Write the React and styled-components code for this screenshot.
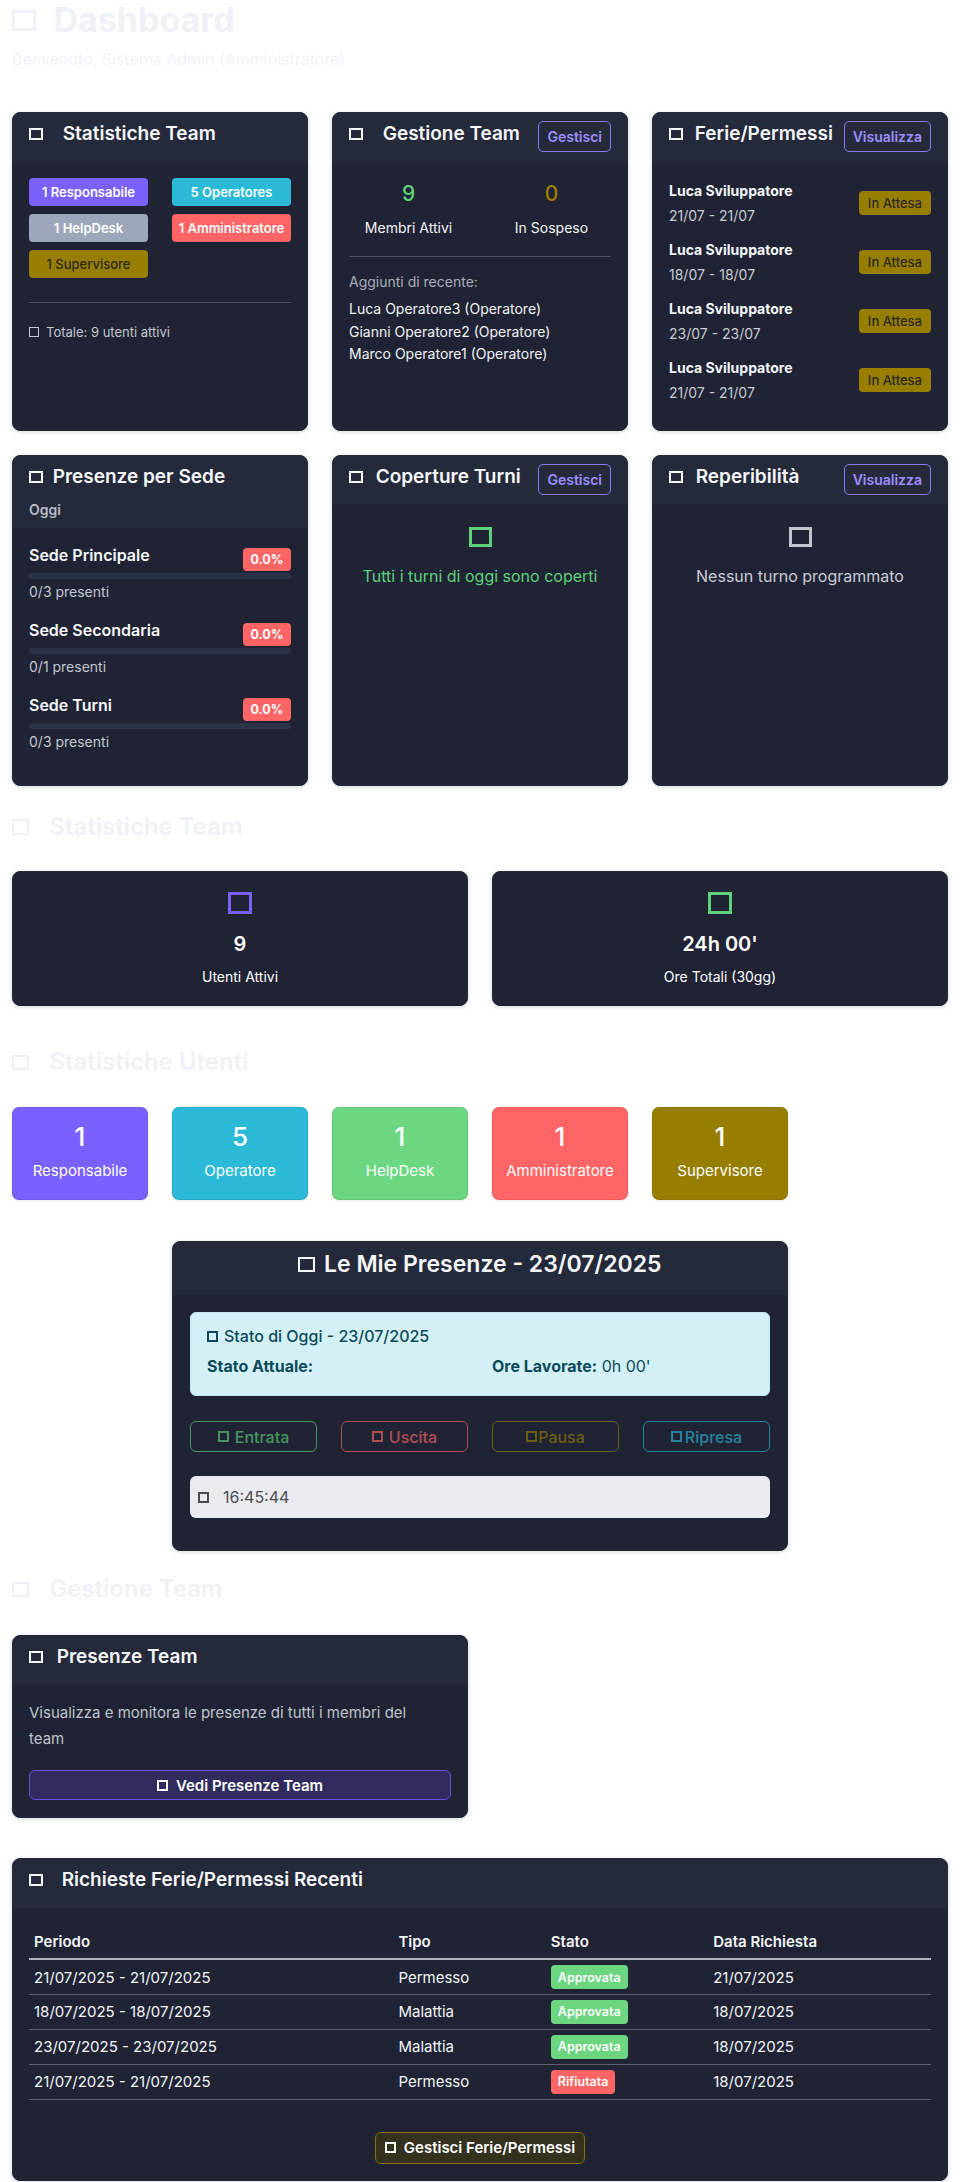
import React from "react";
import styled, { createGlobalStyle } from "styled-components";

const GlobalStyle = createGlobalStyle`
  * {
    box-sizing: border-box;
  }
  body {
    margin: 0;
    background: #ffffff;
    font-family: Inter, "Noto Sans", "Liberation Sans", sans-serif;
    color: #f3f5f8;
  }
`;

const Page = styled.div`
  width: 960px;
  padding: 0 12px 40px;
`;

// the icons never loaded in the original page, they show as empty boxes
const Tofu = styled.span`
  display: inline-block;
  width: ${(p) => p.$w || "0.72em"};
  height: ${(p) => p.$h || "0.63em"};
  border: ${(p) => p.$b || "0.1em"} solid ${(p) => p.$color || "currentColor"};
  margin-right: ${(p) => (p.$gap === undefined ? 8 : p.$gap)}px;
  vertical-align: 0.02em;
  flex-shrink: 0;
`;

const PageTitle = styled.h1`
  margin: 0;
  font-size: 34px;
  font-weight: 700;
  line-height: 40px;
  color: #eef2f7;
`;

const PageSubtitle = styled.p`
  margin: 7px 0 0;
  font-size: 16px;
  line-height: 24px;
  color: #f0f3f7;
`;

const SectionTitle = styled.h3`
  margin: ${(p) => p.$mt}px 0 ${(p) => p.$mb}px;
  font-size: 24px;
  font-weight: 600;
  line-height: 29px;
  color: #eef2f7;
`;

const Grid = styled.div`
  display: grid;
  grid-template-columns: repeat(${(p) => p.$cols}, 1fr);
  gap: 24px;
  margin-top: ${(p) => p.$mt || 0}px;
`;

const Card = styled.div`
  background: #1f2334;
  border: 1px solid #23283a;
  border-radius: 8px;
  overflow: hidden;
  box-shadow: 0 1px 4px rgba(15, 20, 35, 0.18);
  grid-column: ${(p) => p.$span || "auto"};
  margin-top: ${(p) => p.$mt || 0}px;
`;

const CardHeader = styled.div`
  display: flex;
  flex-direction: ${(p) => (p.$stack ? "column" : "row")};
  justify-content: ${(p) => (p.$center ? "center" : "space-between")};
  align-items: flex-start;
  min-height: 49px;
  padding: 8px 16px;
  background: #252a3b;
`;

const CardTitle = styled.h5`
  margin: 0;
  font-size: 19px;
  font-weight: 600;
  line-height: 25px;
  color: #f5f7fa;
  white-space: nowrap;
`;

const BigTitle = styled.h4`
  margin: 0 0 9px;
  width: 100%;
  text-align: center;
  font-size: 23px;
  font-weight: 600;
  line-height: 28px;
  color: #f5f7fa;
`;

const HeaderNote = styled.div`
  margin-top: 11px;
  font-size: 14px;
  font-weight: 600;
  line-height: 20px;
  color: #b5bac5;
`;

const SmallOutline = styled.button`
  height: 31px;
  padding: 0 8px;
  border: 1px solid #8b78f3;
  border-radius: 5px;
  background: transparent;
  color: #9e8dff;
  font-family: inherit;
  font-size: 14px;
  font-weight: 600;
`;

const CardBody = styled.div`
  padding: ${(p) => p.$pad || "16px"};
  text-align: ${(p) => (p.$center ? "center" : "left")};
`;

/* --- Statistiche Team card --- */

const BadgeGrid = styled.div`
  display: grid;
  grid-template-columns: 1fr 1fr;
  column-gap: 24px;
  row-gap: 8px;
`;

const RoleBadge = styled.div`
  height: 28px;
  border-radius: 4px;
  background: ${(p) => p.$bg};
  color: ${(p) => p.$fg || "#ffffff"};
  font-size: 13px;
  font-weight: ${(p) => p.$weight || 600};
  display: flex;
  align-items: center;
  justify-content: center;
`;

const Divider = styled.hr`
  border: 0;
  border-top: 1px solid #4a5063;
  margin: ${(p) => p.$m};
`;

const Muted = styled.div`
  font-size: ${(p) => p.$size || 14}px;
  line-height: ${(p) => p.$lh || 20}px;
  color: #c3c7d0;
  margin-top: ${(p) => p.$mt || 0}px;
`;

/* --- Gestione Team card --- */

const CountValue = styled.div`
  margin-top: 2px;
  font-size: 21px;
  font-weight: 500;
  line-height: 28px;
  color: ${(p) => p.$color};
`;

const CountLabel = styled.div`
  margin-top: 10px;
  font-size: 14px;
  line-height: 20px;
  color: #f3f5f8;
`;

const NameLine = styled.div`
  font-size: 14px;
  line-height: 22.5px;
  color: #f1f3f7;
`;

/* --- Ferie / Permessi card --- */

const LeaveItem = styled.div`
  display: flex;
  justify-content: space-between;
  align-items: center;
  margin-bottom: 9px;
`;

const LeaveName = styled.div`
  font-size: 14px;
  font-weight: 700;
  line-height: 26px;
  color: #f5f7fa;
`;

const LeaveDate = styled.div`
  font-size: 14px;
  line-height: 24px;
  color: #c7cbd3;
`;

const PillBadge = styled.span`
  display: inline-flex;
  align-items: center;
  justify-content: center;
  height: ${(p) => p.$h || 24}px;
  padding: 0 ${(p) => p.$px || 8}px;
  border-radius: 4px;
  background: ${(p) => p.$bg};
  color: ${(p) => p.$fg || "#ffffff"};
  font-size: ${(p) => p.$size || 13}px;
  font-weight: ${(p) => p.$weight || 500};
`;

/* --- Presenze per Sede --- */

const SiteItem = styled.div`
  margin-bottom: 17px;
`;

const SiteRow = styled.div`
  display: flex;
  justify-content: space-between;
  align-items: flex-start;
  height: 29px;
`;

const SiteName = styled.div`
  font-size: 16px;
  font-weight: 600;
  line-height: 22px;
  color: #f5f7fa;
`;

const Track = styled.div`
  height: 6px;
  border-radius: 3px;
  background: #2c3245;
`;

/* --- empty state cards --- */

const EmptyIcon = styled(Tofu)`
  margin: 6px 0 0;
`;

const EmptyText = styled.div`
  margin-top: 13px;
  font-size: 16px;
  line-height: 24px;
  color: ${(p) => p.$color};
`;

/* --- stat cards --- */

const StatCard = styled(Card)`
  padding: 20px 16px 18px;
  text-align: center;
`;

const StatValue = styled.div`
  margin-top: 13px;
  font-size: 20px;
  font-weight: 600;
  line-height: 26px;
  color: #ffffff;
`;

const StatLabel = styled.div`
  margin-top: 10px;
  font-size: 14px;
  line-height: 20px;
  color: #ffffff;
`;

const RoleBox = styled.div`
  background: ${(p) => p.$bg};
  border: 1px solid rgba(0, 0, 0, 0.08);
  border-radius: 7px;
  padding: 13px 6px 17px;
  text-align: center;
  color: #ffffff;
  box-shadow: 0 1px 3px rgba(0, 0, 0, 0.08);
`;

const RoleNumber = styled.div`
  font-size: 26px;
  font-weight: 500;
  line-height: 32px;
`;

const RoleLabel = styled.div`
  margin-top: 7px;
  font-size: 15px;
  line-height: 22px;
`;

/* --- Le mie presenze --- */

const CenterWrap = styled.div`
  display: grid;
  grid-template-columns: repeat(12, 1fr);
  gap: 24px;
`;

const StatusBox = styled.div`
  background: #d3f0f6;
  border: 1px solid #c3e8f0;
  border-radius: 6px;
  padding: 13px 16px 19px;
  color: #0c4a59;
  font-size: 16px;
`;

const StatusTitle = styled.div`
  font-weight: 500;
  line-height: 20px;
`;

const StatusRow = styled.div`
  display: grid;
  grid-template-columns: 1fr 1fr;
  gap: 24px;
  margin-top: 10px;
  line-height: 20px;

  b {
    font-weight: 700;
  }
`;

const ActionRow = styled.div`
  display: grid;
  grid-template-columns: repeat(4, 1fr);
  gap: 24px;
  margin-top: 25px;
`;

const ActionButton = styled.button`
  height: 31px;
  border: 1px solid ${(p) => p.$color};
  border-radius: 6px;
  background: transparent;
  color: ${(p) => p.$color};
  font-family: inherit;
  font-size: 16px;
  font-weight: 500;
  opacity: 0.65;
  display: flex;
  align-items: center;
  justify-content: center;
`;

const ClockBox = styled.div`
  margin-top: 24px;
  height: 42px;
  padding: 0 8px;
  border-radius: 6px;
  background: #ebebef;
  color: #4a4c52;
  font-size: 16px;
  display: flex;
  align-items: center;
`;

/* --- Presenze Team --- */

const Description = styled.p`
  margin: 0;
  max-width: 400px;
  font-size: 15px;
  line-height: 26px;
  color: #bfc3cc;
`;

const WideButton = styled.button`
  width: 100%;
  height: 30px;
  margin-top: 18px;
  border: 1px solid #6a50e2;
  border-radius: 6px;
  background: #2f2c5d;
  color: #ffffff;
  font-family: inherit;
  font-size: 15px;
  font-weight: 600;
`;

/* --- table --- */

const Table = styled.table`
  width: 100%;
  border-collapse: collapse;
  font-size: 15px;
  color: #f3f5f8;

  th {
    text-align: left;
    font-weight: 600;
    padding: 8px 5px 6px;
    line-height: 20px;
    border-bottom: 2px solid #aeb3be;
  }

  td {
    padding: 0 5px;
    height: 35px;
    border-bottom: 1px solid #596073;
  }
`;

const FooterAction = styled.div`
  margin-top: 32px;
  display: flex;
  justify-content: center;
`;

const OliveButton = styled.button`
  height: 32px;
  padding: 0 9px;
  border: 1px solid #8d7500;
  border-radius: 6px;
  background: #34321f;
  color: #ffffff;
  font-family: inherit;
  font-size: 15px;
  font-weight: 600;
`;

const roles = [
  { n: 1, label: "Responsabile", bg: "#7a61ff" },
  { n: 5, label: "Operatores", bg: "#2ab9d6" },
  { n: 1, label: "HelpDesk", bg: "#9ea6b9" },
  { n: 1, label: "Amministratore", bg: "#ff6565" },
  { n: 1, label: "Supervisore", bg: "#977d00", fg: "#2b2a22", weight: 500 },
];

const roleBoxes = [
  { n: 1, label: "Responsabile", bg: "#7a61ff" },
  { n: 5, label: "Operatore", bg: "#2ab9d6" },
  { n: 1, label: "HelpDesk", bg: "#6cd781" },
  { n: 1, label: "Amministratore", bg: "#ff6565" },
  { n: 1, label: "Supervisore", bg: "#977d00" },
];

const leaves = ["21/07 - 21/07", "18/07 - 18/07", "23/07 - 23/07", "21/07 - 21/07"];

const sites = [
  { name: "Sede Principale", count: "0/3 presenti" },
  { name: "Sede Secondaria", count: "0/1 presenti" },
  { name: "Sede Turni", count: "0/3 presenti" },
];

const requests = [
  { period: "21/07/2025 - 21/07/2025", type: "Permesso", ok: true, date: "21/07/2025" },
  { period: "18/07/2025 - 18/07/2025", type: "Malattia", ok: true, date: "18/07/2025" },
  { period: "23/07/2025 - 23/07/2025", type: "Malattia", ok: true, date: "18/07/2025" },
  { period: "21/07/2025 - 21/07/2025", type: "Permesso", ok: false, date: "18/07/2025" },
];

export default function App() {
  return (
    <Page>
      <GlobalStyle />

      <PageTitle>
        <Tofu $gap={17} $b="3px" />
        Dashboard
      </PageTitle>
      <PageSubtitle>Benvenuto, Sistema Admin (Amministratore)</PageSubtitle>

      <Grid $cols={3} $mt={41}>
        <Card>
          <CardHeader>
            <CardTitle>
              <Tofu $gap={20} $b="2px" />
              Statistiche Team
            </CardTitle>
          </CardHeader>
          <CardBody>
            <BadgeGrid>
              {roles.map((r) => (
                <RoleBadge key={r.label} $bg={r.bg} $fg={r.fg} $weight={r.weight}>
                  {r.n} {r.label}
                </RoleBadge>
              ))}
            </BadgeGrid>
            <Divider $m="24px 0 19px" />
            <Muted $size={13}>
              <Tofu $gap={7} $b="1.5px" $w="10px" $h="10px" />
              Totale: 9 utenti attivi
            </Muted>
          </CardBody>
        </Card>

        <Card>
          <CardHeader>
            <CardTitle>
              <Tofu $gap={20} $b="2px" />
              Gestione Team
            </CardTitle>
            <SmallOutline>Gestisci</SmallOutline>
          </CardHeader>
          <CardBody>
            <BadgeGrid style={{ textAlign: "center" }}>
              <div>
                <CountValue $color="#5fd17a">9</CountValue>
                <CountLabel>Membri Attivi</CountLabel>
              </div>
              <div>
                <CountValue $color="#9a7f00">0</CountValue>
                <CountLabel>In Sospeso</CountLabel>
              </div>
            </BadgeGrid>
            <Divider $m="18px 0 15px" />
            <Muted style={{ color: "#a9aeb9" }}>Aggiunti di recente:</Muted>
            <div style={{ marginTop: 6 }}>
              <NameLine>Luca Operatore3 (Operatore)</NameLine>
              <NameLine>Gianni Operatore2 (Operatore)</NameLine>
              <NameLine>Marco Operatore1 (Operatore)</NameLine>
            </div>
          </CardBody>
        </Card>

        <Card>
          <CardHeader>
            <CardTitle>
              <Tofu $gap={12} $b="2px" />
              Ferie/Permessi
            </CardTitle>
            <SmallOutline>Visualizza</SmallOutline>
          </CardHeader>
          <CardBody>
            {leaves.map((d, i) => (
              <LeaveItem key={i}>
                <div>
                  <LeaveName>Luca Sviluppatore</LeaveName>
                  <LeaveDate>{d}</LeaveDate>
                </div>
                <PillBadge $bg="#977d00" $fg="#2c2a22" $px={9}>
                  In Attesa
                </PillBadge>
              </LeaveItem>
            ))}
          </CardBody>
        </Card>
      </Grid>

      <Grid $cols={3} $mt={24}>
        <Card>
          <CardHeader $stack>
            <CardTitle>
              <Tofu $gap={10} $b="2px" />
              Presenze per Sede
            </CardTitle>
            <HeaderNote>Oggi</HeaderNote>
          </CardHeader>
          <CardBody>
            {sites.map((s) => (
              <SiteItem key={s.name}>
                <SiteRow>
                  <SiteName>{s.name}</SiteName>
                  <PillBadge
                    $bg="#ff6565"
                    $h={23}
                    $size={12.5}
                    $weight={700}
                    style={{ marginTop: 4, width: 48 }}
                  >
                    0.0%
                  </PillBadge>
                </SiteRow>
                <Track />
                <Muted $mt={3}>{s.count}</Muted>
              </SiteItem>
            ))}
          </CardBody>
        </Card>

        <Card>
          <CardHeader>
            <CardTitle>
              <Tofu $gap={13} $b="2px" />
              Coperture Turni
            </CardTitle>
            <SmallOutline>Gestisci</SmallOutline>
          </CardHeader>
          <CardBody $center>
            <EmptyIcon $w="23px" $h="20px" $b="3px" $color="#5fd17a" $gap={0} />
            <EmptyText $color="#5fd17a">Tutti i turni di oggi sono coperti</EmptyText>
          </CardBody>
        </Card>

        <Card>
          <CardHeader>
            <CardTitle>
              <Tofu $gap={13} $b="2px" />
              Reperibilità
            </CardTitle>
            <SmallOutline>Visualizza</SmallOutline>
          </CardHeader>
          <CardBody $center>
            <EmptyIcon $w="23px" $h="20px" $b="3px" $color="#c0c4cc" $gap={0} />
            <EmptyText $color="#c8ccd4">Nessun turno programmato</EmptyText>
          </CardBody>
        </Card>
      </Grid>

      <SectionTitle $mt={26} $mb={30}>
        <Tofu $gap={20} $b="2px" />
        Statistiche Team
      </SectionTitle>

      <Grid $cols={2}>
        <StatCard>
          <Tofu $w="24px" $h="22px" $b="3px" $color="#7a61ff" $gap={0} />
          <StatValue>9</StatValue>
          <StatLabel>Utenti Attivi</StatLabel>
        </StatCard>
        <StatCard>
          <Tofu $w="24px" $h="22px" $b="3px" $color="#5fd17a" $gap={0} />
          <StatValue>24h 00'</StatValue>
          <StatLabel>Ore Totali (30gg)</StatLabel>
        </StatCard>
      </Grid>

      <SectionTitle $mt={41} $mb={31}>
        <Tofu $gap={20} $b="2px" />
        Statistiche Utenti
      </SectionTitle>

      <Grid $cols={6}>
        {roleBoxes.map((r) => (
          <RoleBox key={r.label} $bg={r.bg}>
            <RoleNumber>{r.n}</RoleNumber>
            <RoleLabel>{r.label}</RoleLabel>
          </RoleBox>
        ))}
      </Grid>

      <CenterWrap>
        <Card $span="3 / span 8" $mt={41}>
          <CardHeader $center>
            <BigTitle>
              <Tofu $gap={9} $b="2.5px" />
              Le Mie Presenze - 23/07/2025
            </BigTitle>
          </CardHeader>
          <CardBody $pad="17px 17px 32px">
            <StatusBox>
              <StatusTitle>
                <Tofu $gap={6} $b="2px" $w="11px" $h="11px" />
                Stato di Oggi - 23/07/2025
              </StatusTitle>
              <StatusRow>
                <div>
                  <b>Stato Attuale:</b>
                </div>
                <div>
                  <b>Ore Lavorate:</b> 0h 00'
                </div>
              </StatusRow>
            </StatusBox>
            <ActionRow>
              <ActionButton $color="#5fd17a">
                <Tofu $gap={6} $b="2px" $w="11px" $h="11px" />
                Entrata
              </ActionButton>
              <ActionButton $color="#ff6565">
                <Tofu $gap={6} $b="2px" $w="11px" $h="11px" />
                Uscita
              </ActionButton>
              <ActionButton $color="#977d00">
                <Tofu $gap={1} $b="2px" $w="11px" $h="11px" />
                Pausa
              </ActionButton>
              <ActionButton $color="#2ab9d6">
                <Tofu $gap={3} $b="2px" $w="11px" $h="11px" />
                Ripresa
              </ActionButton>
            </ActionRow>
            <ClockBox>
              <Tofu $gap={14} $b="2px" $w="11px" $h="11px" />
              16:45:44
            </ClockBox>
          </CardBody>
        </Card>
      </CenterWrap>

      <SectionTitle $mt={23} $mb={32}>
        <Tofu $gap={20} $b="2px" />
        Gestione Team
      </SectionTitle>

      <Grid $cols={2}>
        <Card>
          <CardHeader>
            <CardTitle>
              <Tofu $gap={14} $b="2px" />
              Presenze Team
            </CardTitle>
          </CardHeader>
          <CardBody $pad="15px 16px 17px">
            <Description>
              Visualizza e monitora le presenze di tutti i membri del team
            </Description>
            <WideButton>
              <Tofu $gap={8} $b="2px" $w="11px" $h="11px" />
              Vedi Presenze Team
            </WideButton>
          </CardBody>
        </Card>
      </Grid>

      <Card $mt={40}>
        <CardHeader>
          <CardTitle>
            <Tofu $gap={19} $b="2px" />
            Richieste Ferie/Permessi Recenti
          </CardTitle>
        </CardHeader>
        <CardBody>
          <Table>
            <thead>
              <tr>
                <th style={{ width: "40.4%" }}>Periodo</th>
                <th style={{ width: "16.9%" }}>Tipo</th>
                <th style={{ width: "18%" }}>Stato</th>
                <th>Data Richiesta</th>
              </tr>
            </thead>
            <tbody>
              {requests.map((r, i) => (
                <tr key={i}>
                  <td>{r.period}</td>
                  <td>{r.type}</td>
                  <td>
                    <PillBadge
                      $bg={r.ok ? "#6bd67f" : "#ff6565"}
                      $size={12.5}
                      $weight={600}
                      $px={7}
                    >
                      {r.ok ? "Approvata" : "Rifiutata"}
                    </PillBadge>
                  </td>
                  <td>{r.date}</td>
                </tr>
              ))}
            </tbody>
          </Table>
          <FooterAction>
            <OliveButton>
              <Tofu $gap={8} $b="2px" $w="11px" $h="11px" />
              Gestisci Ferie/Permessi
            </OliveButton>
          </FooterAction>
        </CardBody>
      </Card>
    </Page>
  );
}
